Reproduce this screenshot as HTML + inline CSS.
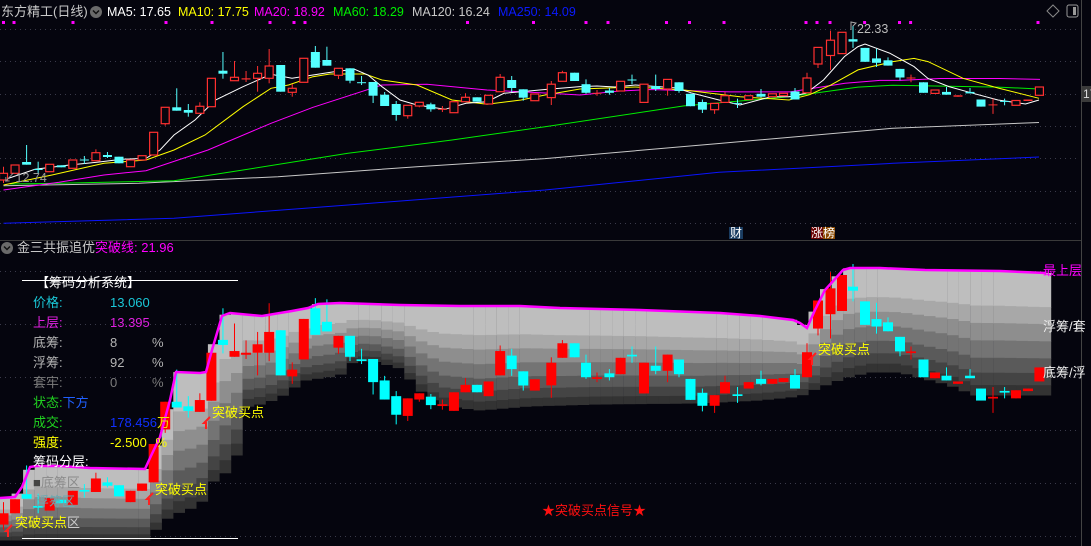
<!DOCTYPE html>
<html><head><meta charset="utf-8">
<style>
html,body{margin:0;padding:0;background:#05050e;}
#w{position:relative;width:1091px;height:546px;overflow:hidden;background:#05050e;font-family:"Liberation Sans","Noto Sans CJK SC",sans-serif;}
svg{position:absolute;left:0;top:0;}
.t{position:absolute;white-space:nowrap;font-size:13px;line-height:14px;}
</style></head><body>
<div id="w">
<svg id="s" width="1091" height="546" viewBox="0 0 1091 546">
<g id="grid" stroke="#3a3a4a" stroke-dasharray="1,4" stroke-width="1">
<line x1="0" y1="29.5" x2="1080" y2="29.5"/><line x1="0" y1="61.5" x2="1080" y2="61.5"/>
<line x1="0" y1="94.5" x2="1080" y2="94.5"/><line x1="0" y1="126.5" x2="1080" y2="126.5"/>
<line x1="0" y1="158.5" x2="1080" y2="158.5"/><line x1="0" y1="191.5" x2="1080" y2="191.5"/>
<line x1="0" y1="223.5" x2="1080" y2="223.5"/>
<line x1="0" y1="271.5" x2="1080" y2="271.5"/><line x1="0" y1="324.5" x2="1080" y2="324.5"/>
<line x1="0" y1="377.5" x2="1080" y2="377.5"/><line x1="0" y1="430.5" x2="1080" y2="430.5"/>
<line x1="0" y1="483.5" x2="1080" y2="483.5"/><line x1="0" y1="536.5" x2="1080" y2="536.5"/>
</g>
<g id="dyn"></g>
<line x1="0" y1="240.5" x2="1081" y2="240.5" stroke="#3a3a3a"/>
<line x1="1081.5" y1="0" x2="1081.5" y2="546" stroke="#444"/>
<line x1="22" y1="280.5" x2="238" y2="280.5" stroke="#fff"/>
<line x1="22" y1="538.5" x2="238" y2="538.5" stroke="#fff"/>
<rect x="1082" y="86" width="9" height="16" fill="#3a3a3a"/>
<circle cx="96" cy="12" r="6" fill="#6a6a6a"/><path d="M93 10.5 L96 13.5 L99 10.5" stroke="#111" stroke-width="1.5" fill="none"/>
<circle cx="7" cy="248" r="6" fill="#6a6a6a"/><path d="M4 246.5 L7 249.5 L10 246.5" stroke="#111" stroke-width="1.5" fill="none"/>
<path d="M1053 5 L1059 11 L1053 17 L1047 11 Z" stroke="#888" fill="none"/>
<rect x="1067" y="5" width="11" height="12" rx="2" stroke="#999" fill="none"/><rect x="1073" y="7" width="3" height="8" fill="#999"/>
<path d="M851 30 L851 22 L856 23 L853 26" stroke="#aaa" fill="none"/>
<rect x="729" y="227" width="14" height="12" fill="#1a3c60"/>
<rect x="811" y="227" width="12" height="12" fill="#6a0000"/><rect x="823" y="227" width="12" height="12" fill="#8a4a00"/>
</svg>

<div class="t" style="left:1px;top:5px;color:#c8c8c8;font-size:13px">东方精工(日线)</div>
<div class="t" style="left:107px;top:5px;color:#fff;font-size:12.5px">MA5: 17.65</div>
<div class="t" style="left:178px;top:5px;color:#ffff00;font-size:12.5px">MA10: 17.75</div>
<div class="t" style="left:254px;top:5px;color:#ff00ff;font-size:12.5px">MA20: 18.92</div>
<div class="t" style="left:333px;top:5px;color:#00ee00;font-size:12.5px">MA60: 18.29</div>
<div class="t" style="left:412px;top:5px;color:#c8c8c8;font-size:12.5px">MA120: 16.24</div>
<div class="t" style="left:498px;top:5px;color:#0a1aff;font-size:12.5px">MA250: 14.09</div>
<div class="t" style="left:857px;top:22px;color:#bbb;font-size:12.5px">22.33</div>
<div class="t" style="left:3px;top:171px;color:#999;font-size:12.5px">↙12.74</div>
<div class="t" style="left:1083px;top:87px;color:#ddd;font-size:12px">17</div>
<div class="t" style="left:730px;top:226px;color:#fff;font-size:12px">财</div>
<div class="t" style="left:811px;top:226px;color:#fff;font-size:12px">涨榜</div>

<div class="t" style="left:17px;top:241px;color:#c8c8c8">金三共振追优</div>
<div class="t" style="left:95px;top:241px;color:#ff00ff">突破线: 21.96</div>

<div class="t" style="left:36px;top:276px;color:#fff">【筹码分析系统】</div>
<div class="t" style="left:33px;top:296px;color:#1ac8d8">价格:</div><div class="t" style="left:110px;top:296px;color:#1ac8d8">13.060</div>
<div class="t" style="left:33px;top:316px;color:#e020e0">上层:</div><div class="t" style="left:110px;top:316px;color:#e020e0">13.395</div>
<div class="t" style="left:33px;top:336px;color:#b4b4b4">底筹:</div><div class="t" style="left:110px;top:336px;color:#b4b4b4">8</div><div class="t" style="left:152px;top:336px;color:#b4b4b4">%</div>
<div class="t" style="left:33px;top:356px;color:#b4b4b4">浮筹:</div><div class="t" style="left:110px;top:356px;color:#b4b4b4">92</div><div class="t" style="left:152px;top:356px;color:#b4b4b4">%</div>
<div class="t" style="left:33px;top:376px;color:#7c7c7c">套牢:</div><div class="t" style="left:110px;top:376px;color:#7c7c7c">0</div><div class="t" style="left:152px;top:376px;color:#7c7c7c">%</div>
<div class="t" style="left:33px;top:396px;color:#20d020">状态:<span style="color:#2060ff">下方</span></div>
<div class="t" style="left:33px;top:416px;color:#20d020">成交:</div><div class="t" style="left:110px;top:416px;color:#1030ff">178.456<span style="color:#e8e800">万</span></div>
<div class="t" style="left:33px;top:436px;color:#ffff00">强度:</div><div class="t" style="left:110px;top:436px;color:#ffff00">-2.500 <span style="margin-left:5px">%</span></div>
<div class="t" style="left:33px;top:455px;color:#fff">筹码分层:</div>
<div class="t" style="left:33px;top:476px;color:#8a8a8a"><span style="color:#444">■</span>底筹区</div>
<div class="t" style="left:36px;top:495px;color:#6aa8b0">浮筹区</div>
<div class="t" style="left:15px;top:516px;color:#ffff00">突破买点<span style="color:#ccc">区</span></div>
<div class="t" style="left:212px;top:406px;color:#ffff00">突破买点</div>
<div class="t" style="left:155px;top:483px;color:#ffff00">突破买点</div>
<div class="t" style="left:818px;top:343px;color:#ffff00">突破买点</div>
<div class="t" style="left:542px;top:504px;color:#ff1010">★突破买点信号★</div>
<div class="t" style="left:1043px;top:264px;color:#ff00ff">最上层</div>
<div class="t" style="left:1043px;top:320px;color:#eee">浮筹/套</div>
<div class="t" style="left:1043px;top:366px;color:#eee">底筹/浮</div>
</div>

<script>
(function(){
var L=[[173.3,180,166.7,183,'r'],[165,173.3,165,173.3,'r'],[162,164.7,145,164.7,'c'],[169,170,161.7,173.3,'c'],[164.3,171.7,164.3,171.7,'r'],[165.3,167.3,165.3,167.3,'c'],[160,168.3,160,168.3,'r'],[159.5,160.5,156,164,'c'],[152.7,160.7,149.3,160.7,'r'],[155,157,152,158,'c'],[156.7,163.3,156.7,163.3,'c'],[160,166.7,160,166.7,'r'],[155.7,160,155.7,160,'r'],[132.3,155,132.3,155,'r'],[107.3,123.7,107.3,125.7,'r'],[107.3,110.7,88.3,110.7,'c'],[110,112.7,104,116.7,'c'],[106.3,113.3,102.3,113.3,'r'],[78.3,106.7,78.3,106.7,'r'],[70.7,73.7,52,78.7,'c'],[77.3,80.7,61,80.7,'r'],[78.3,79.5,71,82,'r'],[73.3,78.3,66,91.7,'r'],[66,78.3,49,83.3,'r'],[65,91.7,65,91.7,'c'],[88.3,92.3,84,96.7,'r'],[58.3,82.3,58.3,82.3,'r'],[52,67.7,46,67.7,'c'],[60,65.7,46.7,65.7,'c'],[68.3,75.3,68.3,79,'r'],[68.3,80.7,68.3,83.3,'c'],[82.2,83.2,76,85,'c'],[82,95.7,82,103,'c'],[94.7,106,92,106,'c'],[104,115,101,120.7,'c'],[105.3,115.7,105.3,118.7,'r'],[102.3,106,102.3,107.3,'r'],[104.3,109.3,102.7,111.7,'c'],[108.8,109.8,106,112,'r'],[101.7,112.7,101.7,112.7,'r'],[97.3,101.7,93.3,101.7,'r'],[97.3,101.7,97.3,101.7,'c'],[95.3,104,95.3,104,'r'],[77.3,91.7,74,91.7,'r'],[80,88,76,92,'c'],[89.3,97.7,89.3,100.7,'c'],[94,100.7,94,100.7,'r']];
var R=[[551.3,84.2,97.6,81,105,'r'],[562.4,72.7,81.3,70.8,81.3,'r'],[574.6,72.7,81,72.7,81,'c'],[586,84.2,92.8,79.4,93.8,'c'],[597,92.8,93.8,90,95.7,'r'],[609.4,90.5,92.8,88,94.7,'c'],[620.6,81.3,91,81.3,91,'r'],[632,79.5,80.5,74.6,84.2,'c'],[644,84.2,102.4,84.2,102.4,'r'],[655.7,86,89,74.6,91,'c'],[667.6,79.4,89,79.4,95.7,'r'],[679,82.3,91,82.3,92.8,'c'],[690.5,93.8,106.2,93.8,106.2,'c'],[702.4,102,109.7,99.5,113,'c'],[714.6,103.4,109.7,103.4,113.9,'r'],[725,95.7,102.4,91.9,102.4,'r'],[737.5,102.9,103.9,98.6,108,'c'],[748.7,95.7,99.5,95.7,99.5,'r'],[761,93.8,96.7,89,97.6,'c'],[772.4,93.8,96.7,93.8,96.7,'r'],[783.5,93.3,95.7,93.3,95.7,'r'],[795,91.5,99.5,88,99.5,'c'],[807,78,92.8,72.7,92.8,'r'],[818,47.4,64,47.4,68,'r'],[830.5,40.2,55.5,30.6,69.9,'r'],[842,32.3,53.6,32.3,53.6,'r'],[853,39.2,41.6,25.8,47.9,'c'],[865,47.9,61.8,47.9,61.8,'c'],[876.5,58.4,62.8,48.8,67,'c'],[888,60.3,65.6,57.4,65.6,'c'],[900,68.9,77.5,68.9,80.4,'c'],[911,77.5,78.5,74.6,82.3,'r'],[923.5,82.3,92.8,82.3,92.8,'c'],[935,90,93.4,90,93.4,'r'],[946.5,91.9,94.7,87,94.7,'c'],[958,95.3,96.7,95.3,96.7,'r'],[970,91.9,93.4,88,93.4,'c'],[981,99.5,106.6,99.5,106.6,'c'],[993,104.4,105.4,98.6,113.9,'r'],[1004.6,100.9,101.9,98.6,105.3,'c'],[1016,100.5,105.3,100.5,105.3,'r'],[1028,99.5,101,99.5,101,'r'],[1039.4,87,95.3,87,95.3,'r']];
var C=[];L.forEach(function(d,i){C.push([3.5+11.55*i].concat(d));});R.forEach(function(d){C.push(d);});
function ip(p,x){if(x<=p[0][0])return p[0][1];for(var i=1;i<p.length;i++){if(x<=p[i][0]){var a=p[i-1],b=p[i];return a[1]+(b[1]-a[1])*(x-a[0])/(b[0]-a[0]);}}return p[p.length-1][1];}
var topL=[[0,498],[15,497],[22,487],[30,467],[36,466],[60,466],[90,468],[145,469],[150,458],[160,437],[170,400],[176,372],[200,373],[206,372],[212,350],[222,316],[227,314],[230,313],[262,316],[292,311],[308,308],[318,304],[340,303],[400,305],[460,306],[520,306],[560,308],[640,310],[720,313],[760,316],[793,320],[800,323],[807,328],[815,310],[825,290],[835,279],[843,270],[850,268],[880,268],[925,270],[1000,271],[1046,273]];
var botL=[[0,540],[150,540],[160,522],[180,512],[200,505],[220,470],[235,478],[236,455],[243,455],[244,407],[266,403],[290,392],[300,381],[340,375],[350,363],[370,360],[400,368],[420,390],[440,405],[480,410],[530,406],[600,404],[700,403],[760,400],[800,396],[813,390],[830,383],[848,377],[870,372],[900,372],[950,385],[975,395],[1046,395]];
var g=document.getElementById('dyn'),h='';
function pl(p,c,w){return '<polyline fill="none" stroke="'+c+'" stroke-width="'+(w||1)+'" points="'+p.map(function(q){return q.join(',')}).join(' ')+'"/>';}
var bands=[[0,'#bebebe'],[0.28,'#a8a8a8'],[0.42,'#8e8e8e'],[0.56,'#747474'],[0.7,'#5a5a5a'],[0.82,'#444444'],[0.92,'#333333'],[1,'']];
for(var x=0;x<1046;x+=11.55){var xm=x+5.8,t=ip(topL,xm),b=ip(botL,xm);if(b>t){var H=b-t;for(var k=0;k<bands.length-1;k++){var y1=t+H*bands[k][0],y2=t+H*bands[k+1][0];h+='<rect x="'+x.toFixed(1)+'" y="'+y1.toFixed(1)+'" width="11.7" height="'+(y2-y1+0.5).toFixed(1)+'" fill="'+bands[k][1]+'"/>';}}}
h+=pl([[3.5,223.3],[174,218.3],[348,205],[545,190],[719,172.3],[893,163.3],[1039,157]],'#0a14ff');
h+=pl([[3.5,185.7],[139,183.3],[278,176.7],[417,166.7],[545,158.6],[719,143.5],[893,128.2],[1039,122.5]],'#c8c8c8');
h+=pl([[10,184],[59,183.3],[174,180.7],[243,170],[348,153.3],[452,140],[545,126.8],[684,105.9],[789,96.7],[858,87.1],[893,85.2],[998,87.1],[1039,89]],'#00ee00');
h+=pl([[3.5,190],[59,182.3],[104,175],[146,170.7],[208,150],[271,123.3],[313,107.3],[382,85],[427,84.3],[487,90],[545,93],[580,95],[620,91],[650,89.5],[700,91],[730,91.9],[790,91.9],[815,88],[845,83.3],[880,80.4],[900,80.4],[940,78.5],[1000,78.5],[1040,79.4]],'#ff00ff');
h+=pl([[3.5,185],[52,175],[104,163.3],[146,160],[174,150],[205,135],[243,106.7],[271,88.3],[288.5,85],[313,76.7],[330,74],[365,74],[382,80],[417,85],[452,100],[487,104.3],[521,100],[545,95],[580,89],[635.5,87],[684,90],[740,96.7],[789,100],[809.6,94.7],[830.5,85.2],[858,69.9],[893,61.6],[914,58.4],[928,61.6],[963,78.3],[998,88],[1039,98.3]],'#ffff00');
h+=pl([[3.5,180],[35,169.3],[69.5,165],[97,162.3],[122,159.3],[146,158.3],[160,150],[174,135],[195,120],[215.5,100],[243,86.7],[271,74.3],[292,78.3],[313,75],[334,71.7],[354.5,69.3],[368,75],[382,86.7],[400,100],[417,105],[445,109.3],[466,103.3],[487,101.7],[504,93.3],[521,91.7],[545,89.5],[580,86.6],[597,86],[615,87],[635.5,85],[677,88],[691,92.8],[719,100],[740,105],[771,96.7],[789,96.7],[806,93.3],[823.5,80],[844.5,56.5],[858,46.6],[865,44],[890,53.3],[914,66.6],[928,78.5],[949,86.6],[973,93.3],[998,100],[1025.5,104],[1039,100]],'#ffffff');
C.forEach(function(d){var x=d[0],bt=d[1],bb=d[2],wt=d[3],wb=d[4],red=d[5]=='r';
 var col=red?'#ff3030':'#55ffff';var bh=Math.max(bb-bt,1);
 h+='<line x1="'+x+'" y1="'+wt+'" x2="'+x+'" y2="'+wb+'" stroke="'+col+'"/>';
 if(red&&bh>2)h+='<rect x="'+(x-4)+'" y="'+bt+'" width="8" height="'+bh+'" fill="#05050e" stroke="'+col+'" stroke-width="1.2"/>';
 else h+='<rect x="'+(x-4.5)+'" y="'+bt+'" width="9" height="'+bh+'" fill="'+col+'"/>';
 var f=function(y){return 1.69*y+220.4};var c2=red?'#ff0000':'#00ffff';var b1=f(bt),b2=f(bb);
 h+='<line x1="'+x+'" y1="'+f(wt)+'" x2="'+x+'" y2="'+f(wb)+'" stroke="'+c2+'"/>';
 h+='<rect x="'+(x-5)+'" y="'+b1+'" width="10" height="'+Math.max(b2-b1,1.5)+'" fill="'+c2+'"/>';
});
h+=pl(topL,'#ff00ff',2.5);
[3.5,14,73,166,212,270,294,305,467.5,533.5,586,608,666.5,689.5,724,806,817,830,864.6,899.5,910.6,1038].forEach(function(x){h+='<rect x="'+(x-1.5)+'" y="21" width="3" height="3" fill="#ff00ff"/>';});
[[210,417],[153,493],[816,353],[12,525]].forEach(function(p){h+='<path d="M'+p[0]+' '+p[1]+' l-6 6 l2 0 l0 6" stroke="#ff2020" stroke-width="2" fill="none"/>';});
g.innerHTML=h;
})();
</script>
</body></html>
